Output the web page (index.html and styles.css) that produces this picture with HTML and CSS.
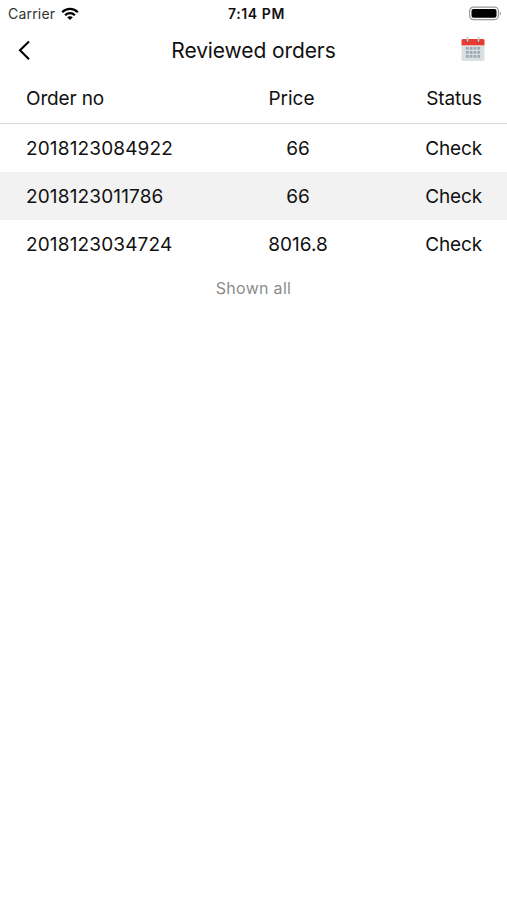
FILE: index.html
```html
<!DOCTYPE html>
<html lang="en">
  <head>
    <meta charset="UTF-8" />
    <meta name="viewport" content="width=device-width, initial-scale=1.0" />
    <title>Reviewed orders</title>
    <link rel="stylesheet" href="styles.css">
  </head>
  <body>
    <div class="status-bar">
      <div class="carrier">
        <span>Carrier</span>
        <svg class="wifi" width="18" height="14" viewBox="0 0 18 14">
          <g fill="none" stroke="#000" stroke-width="2.3">
            <path d="M1.2 5.2C5.6 0.8 12.4 0.8 16.8 5.2" />
            <path d="M4.1 8.2C6.9 5.4 11.1 5.4 13.9 8.2" />
          </g>
          <path d="M6.2 10.3C7.8 8.8 10.2 8.8 11.8 10.3L9 13.1Z" />
        </svg>
      </div>
      <span class="time">7:14 PM</span>
      <svg class="battery" width="34" height="15" viewBox="0 0 34 15">
        <rect x="1.6" y="1.1" width="28.8" height="12.6" rx="4" fill="#fff" stroke="#999" stroke-width="1.2" />
        <rect x="3.5" y="3" width="25" height="8.8" rx="2" />
        <path d="M31.8 5.4C33.4 6.2 33.4 8.6 31.8 9.4Z" fill="#999" />
      </svg>
    </div>

    <div class="nav-bar">
      <svg class="back" width="14" height="22" viewBox="0 0 14 22">
        <path d="M12 1.4L3 10.3L12 19.2" fill="none" stroke="#000" stroke-width="2.1" />
      </svg>
      <h1 class="title">Reviewed orders</h1>
      <svg class="calendar" width="26" height="26" viewBox="0 0 26 26">
        <path d="M1.5 9H24.5V23.5Q24.5 25 23 25H3Q1.5 25 1.5 23.5Z" fill="#d9dfe2" />
        <path d="M1.5 9.2V4.5Q1.5 3 3 3H23Q24.5 3 24.5 4.5V9.2Z" fill="#ea3a31" />
        <g fill="#b33a35">
          <circle cx="7.5" cy="5" r="1.9" />
          <circle cx="18.5" cy="5" r="1.9" />
        </g>
        <path d="M7.5 1.5V5M18.5 1.5V5" stroke="#c6cdd0" stroke-width="1.8" stroke-linecap="round" />
        <g fill="none" stroke="#9cabb3" stroke-width="2.7" stroke-dasharray="2.8 1">
          <path d="M5.9 12.4H20.1" />
          <path d="M5.9 16.4H20.1" />
          <path d="M5.9 20.4H20.1" />
        </g>
      </svg>
    </div>

    <div class="orders">
      <div class="row head">
        <span>Order no</span>
        <span class="price">Price</span>
        <span class="status">Status</span>
      </div>
      <div class="row">
        <span class="number">2018123084922</span>
        <span class="price">66</span>
        <span class="status">Check</span>
      </div>
      <div class="row shaded">
        <span class="number">2018123011786</span>
        <span class="price">66</span>
        <span class="status">Check</span>
      </div>
      <div class="row">
        <span class="number">2018123034724</span>
        <span class="price">8016.8</span>
        <span class="status">Check</span>
      </div>
    </div>

    <p class="footer">Shown all</p>
  </body>
</html>
```
FILE: styles.css
```css
body {
  margin: 0;
  background: #fff;
  color: #111;
  font-family: Inter, "Liberation Sans", sans-serif;
}

/* Status bar */
.status-bar {
  display: grid;
  grid-template-columns: 1fr auto 1fr;
  align-items: center;
  height: 27px;
  padding: 0 5px 0 8px;
  font-size: 14px;
}

.carrier {
  display: flex;
  align-items: center;
  gap: 6px;
  color: #333;
  letter-spacing: 0.2px;
}

.time {
  padding-left: 3px;
  font-weight: 600;
  letter-spacing: 0.6px;
}

.battery {
  justify-self: end;
}

/* Navigation */
.nav-bar {
  display: grid;
  grid-template-columns: 1fr auto 1fr;
  align-items: center;
  height: 47px;
  padding: 0 21px 0 17px;
}

.title {
  margin: 0;
  padding-left: 4px;
  font-size: 21px;
  font-weight: 400;
  letter-spacing: -0.1px;
}

.calendar {
  justify-self: end;
  margin-bottom: 4px;
}

/* Orders table */
.row {
  display: grid;
  grid-template-columns: 200px 144px 1fr;
  align-items: center;
  height: 48px;
  padding: 0 25px 0 26px;
  font-size: 19px;
  letter-spacing: -0.15px;
}

.head {
  grid-template-columns: 200px 131px 1fr;
  height: 49px;
  border-bottom: 1px solid #d9d9d9;
}

.shaded {
  background: #f2f2f2;
}

.number {
  letter-spacing: 0.15px;
}

.price {
  text-align: center;
  letter-spacing: 0;
}

.status {
  text-align: right;
}

.footer {
  margin: 10px 0 0;
  color: #8c8c8c;
  font-size: 16px;
  line-height: 20px;
  letter-spacing: 0.3px;
  text-align: center;
}
```
